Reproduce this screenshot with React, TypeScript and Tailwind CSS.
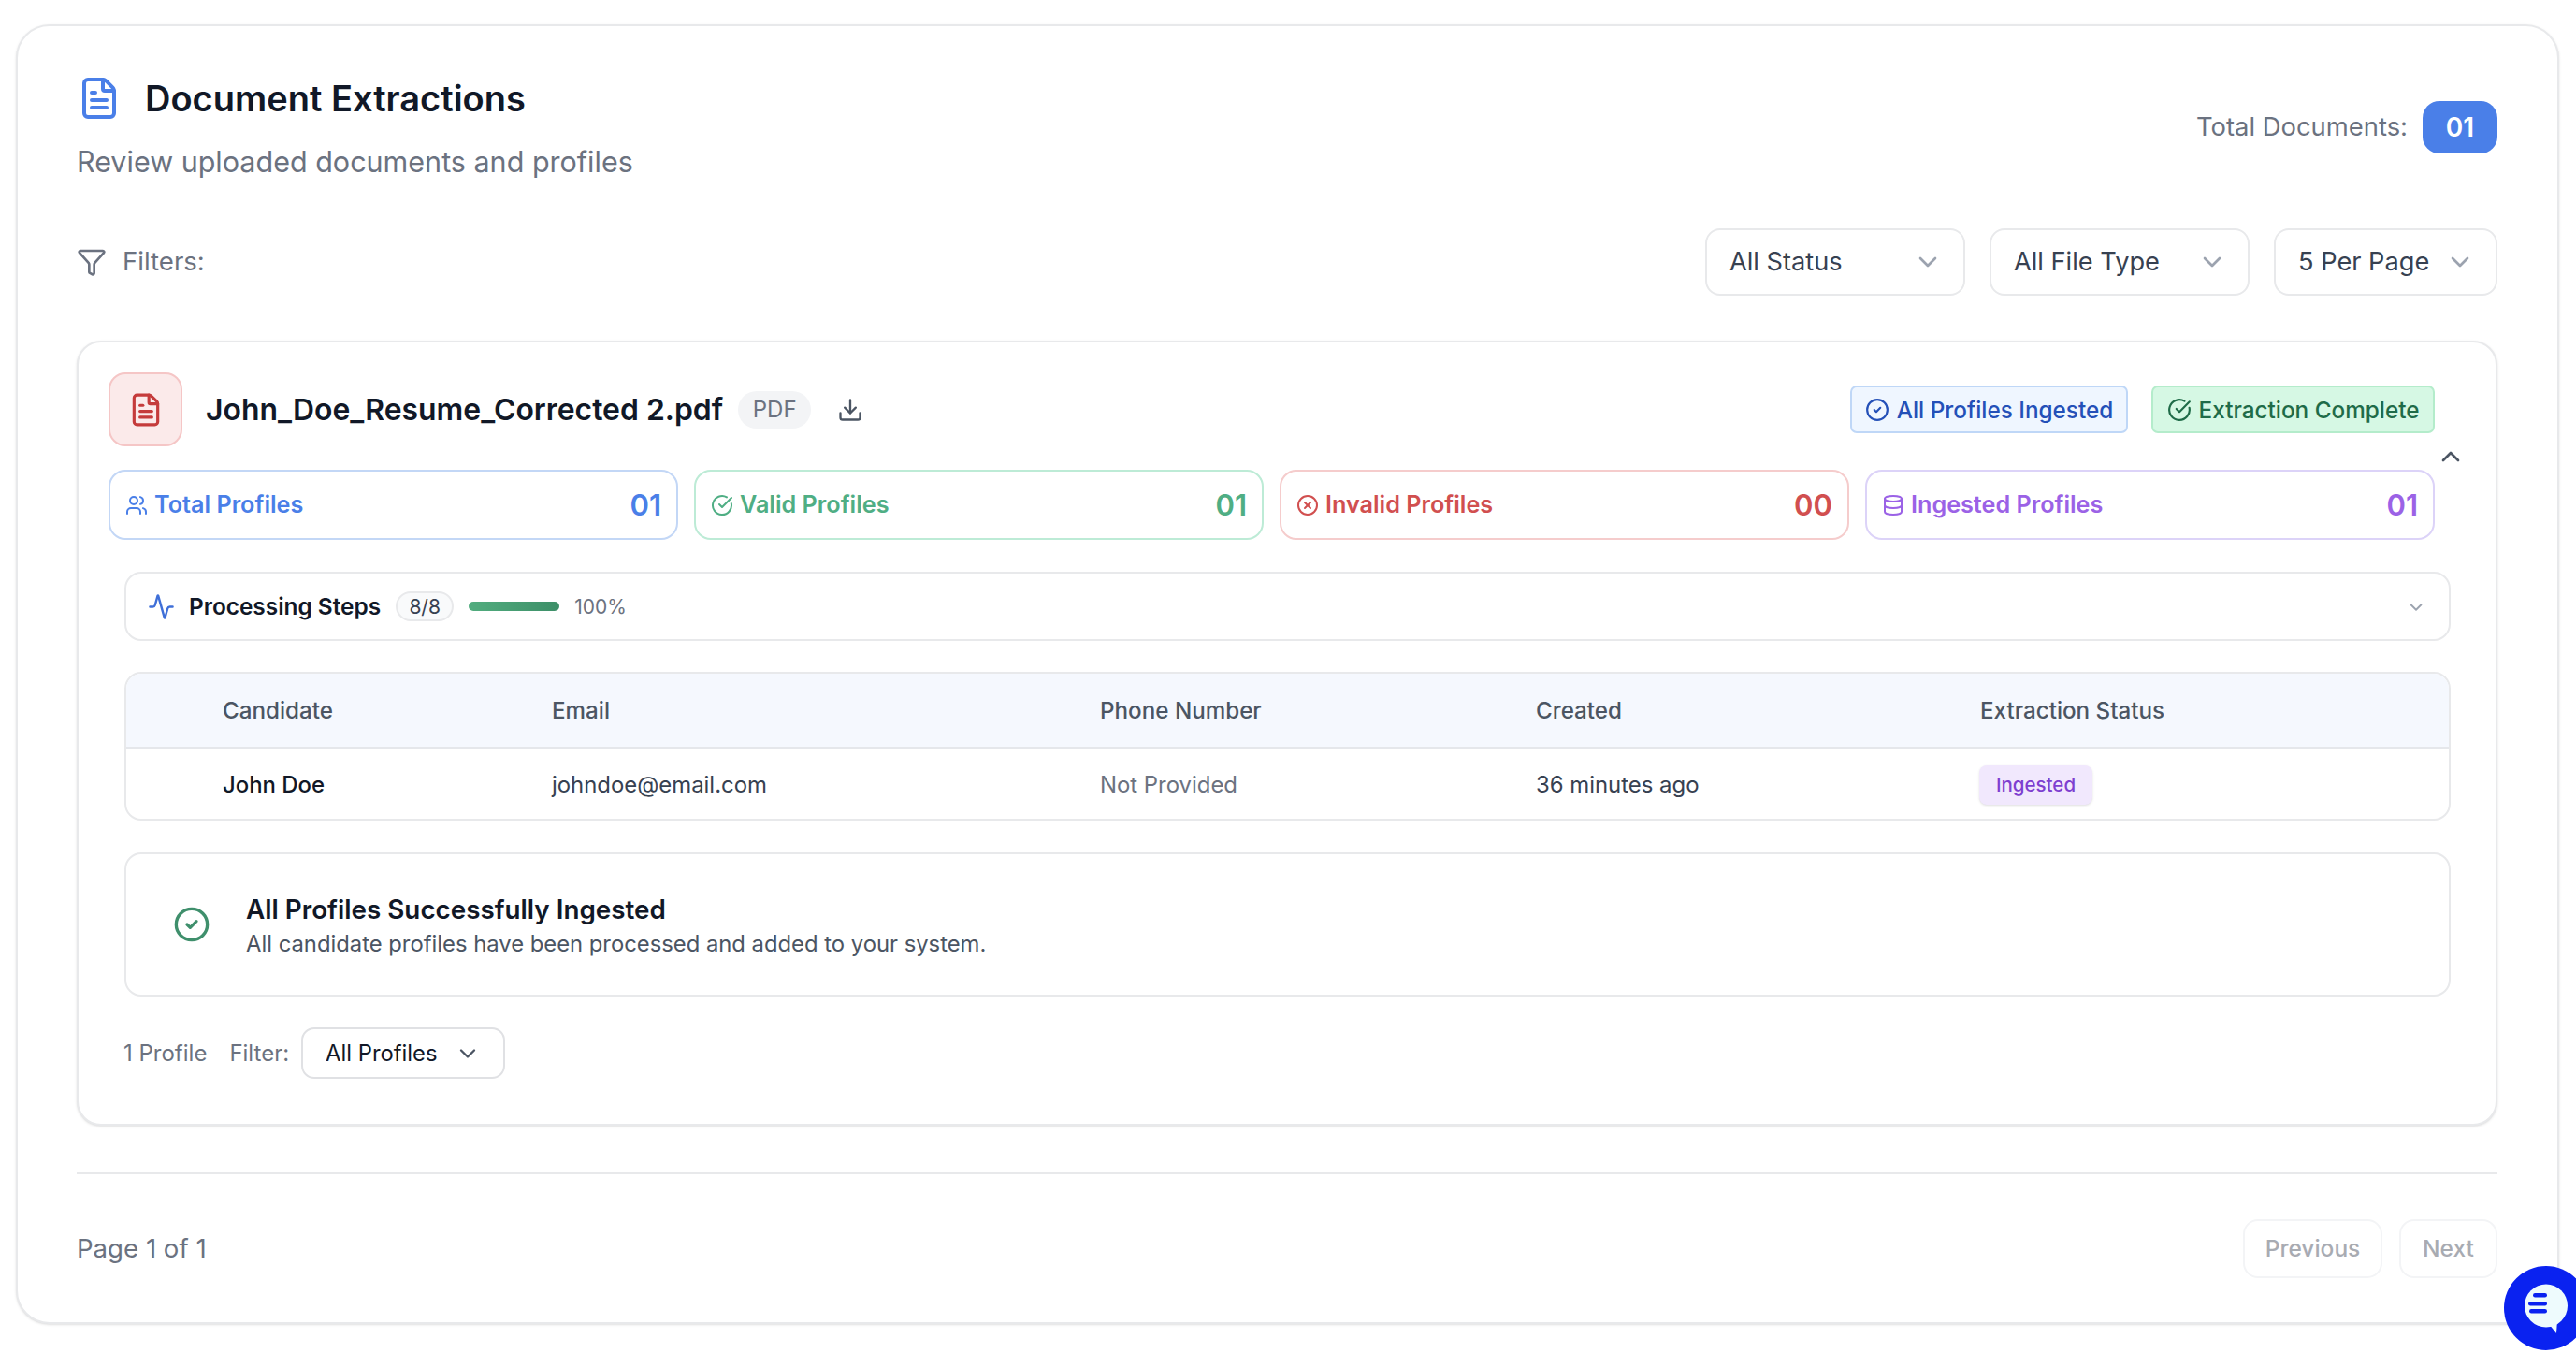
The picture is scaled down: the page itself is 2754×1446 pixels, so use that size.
import { FileText, ChevronDown, ChevronUp, Download, CircleCheck, CircleCheckBig, Users, CircleX, Database, Activity, Funnel } from "lucide-react";

const font = { fontFamily: "Inter, 'Liberation Sans', sans-serif" };

function Select({ label, w }: { label: string; w: string }) {
  return (
    <div className={`flex h-[72px] items-center justify-between rounded-[16px] border-2 border-[#e8e9eb] bg-white pl-[24px] pr-[22px] text-[27.2px] text-[#374151] ${w}`}>
      <span>{label}</span>
      <ChevronDown className="h-[32px] w-[32px] text-[#9ca3af]" strokeWidth={2} />
    </div>
  );
}

function Stat({ icon, label, value, border, color }: { icon: React.ReactNode; label: string; value: string; border: string; color: string }) {
  return (
    <div className={`flex h-[75px] flex-1 items-center justify-between rounded-[18px] border-2 bg-white pl-[16px] pr-[16px] pt-[1px] ${border} ${color}`}>
      <div className="flex items-center gap-[7px] text-[25.2px] font-semibold">
        {icon}
        <span>{label}</span>
      </div>
      <span className="text-[31px] font-semibold">{value}</span>
    </div>
  );
}

export default function App() {
  return (
    <div className="relative h-[1446px] w-full overflow-hidden bg-white" style={font}>
      <div className="ml-[17px] mt-[26px] h-[1389px] w-[2719px] rounded-[36px] border-2 border-[#e8e9eb] bg-white pl-[63px] pr-[64px] pt-[54px] shadow-sm">
        <div className="flex items-start justify-between">
          <div>
            <div className="flex h-[46px] items-center">
              <FileText className="h-[48px] w-[48px] text-[#4a7fe8]" strokeWidth={2} />
              <h1 className="ml-[25px] text-[38px] font-semibold text-[#111827]">Document Extractions</h1>
            </div>
            <p className="mt-[22px] h-[46px] text-[30.5px] leading-[46px] text-[#6b7280]">Review uploaded documents and profiles</p>
          </div>
          <div className="flex h-[108px] items-center gap-[16px]">
            <span className="text-[27.4px] text-[#6b7280]">Total Documents:</span>
            <span className="flex h-[56px] w-[80px] items-center justify-center rounded-[18px] bg-[#4a7fe8] text-[28px] font-semibold text-white">01</span>
          </div>
        </div>

        <div className="mt-[48px] flex h-[72px] items-center justify-between">
          <div className="flex items-center gap-[17px] text-[27.6px] text-[#6b7280]">
            <Funnel className="h-[32px] w-[32px]" strokeWidth={2} />
            <span>Filters:</span>
          </div>
          <div className="flex gap-[26px]">
            <Select label="All Status" w="w-[278px]" />
            <Select label="All File Type" w="w-[278px]" />
            <Select label="5 Per Page" w="w-[239px]" />
          </div>
        </div>

        <div className="relative mt-[48px] h-[839px] rounded-[26px] border-2 border-[#e8e9eb] bg-white pl-[32px] pr-[65px] pt-[32px] shadow-sm">
          <div className="flex h-[79px] items-center justify-between">
            <div className="flex items-center">
              <div className="flex h-[79px] w-[79px] items-center justify-center rounded-[18px] border-2 border-[#f5c6c6] bg-[#fbeaea]">
                <FileText className="h-[38px] w-[38px] text-[#c53b3b]" strokeWidth={2} />
              </div>
              <span className="ml-[25px] pt-[1px] text-[31.9px] font-semibold text-[#111827]">John_Doe_Resume_Corrected 2.pdf</span>
              <span className="ml-[16px] flex h-[40px] w-[78px] items-center justify-center rounded-full bg-[#f3f4f6] text-[24px] text-[#6b7280]">PDF</span>
              <Download className="ml-[28px] h-[28px] w-[28px] text-[#4b5563]" strokeWidth={2} />
            </div>
            <div className="flex items-center gap-[25px]">
              <div className="flex h-[51px] w-[297px] items-center justify-center gap-[8px] rounded-[7px] border-2 border-[#bfd7f7] bg-[#eff6ff] pt-[1px] text-[24.3px] font-medium text-[#2450b8]">
                <CircleCheck className="h-[26px] w-[26px]" strokeWidth={2} />
                <span>All Profiles Ingested</span>
              </div>
              <div className="flex h-[51px] w-[303px] items-center justify-center gap-[8px] rounded-[7px] border-2 border-[#b4eccb] bg-[#d6f8e4] pt-[1px] text-[24.3px] font-medium text-[#1f6b48]">
                <CircleCheckBig className="h-[26px] w-[26px]" strokeWidth={2} />
                <span>Extraction Complete</span>
              </div>
            </div>
          </div>
          <ChevronUp className="absolute right-[32px] top-[106px] h-[32px] w-[32px] text-[#4b5563]" strokeWidth={2} />

          <div className="mt-[25px] flex gap-[17px]">
            <Stat border="border-[#c3d7f6]" color="text-[#4a7fe8]" label="Total Profiles" value="01" icon={<Users className="h-[24px] w-[24px]" strokeWidth={2} />} />
            <Stat border="border-[#bdebd6]" color="text-[#4fae84]" label="Valid Profiles" value="01" icon={<CircleCheckBig className="h-[24px] w-[24px]" strokeWidth={2} />} />
            <Stat border="border-[#f5cccc]" color="text-[#d14f4f]" label="Invalid Profiles" value="00" icon={<CircleX className="h-[24px] w-[24px]" strokeWidth={2} />} />
            <Stat border="border-[#dcd3f8]" color="text-[#9b62e6]" label="Ingested Profiles" value="01" icon={<Database className="h-[24px] w-[24px]" strokeWidth={2} />} />
          </div>

          <div className="ml-[17px] mr-[-17px] mt-[34px] flex h-[74px] items-center justify-between rounded-[18px] border-2 border-[#e8e9eb] bg-white pl-[23px] pr-[24px] pt-[1px]">
            <div className="flex items-center">
              <Activity className="h-[29px] w-[29px] text-[#3f6fd8]" strokeWidth={2} />
              <span className="ml-[15px] text-[24.4px] font-semibold text-[#111827]">Processing Steps</span>
              <span className="ml-[16px] flex h-[32px] w-[62px] items-center justify-center rounded-full border-2 border-[#e8e9eb] bg-[#f9fafb] text-[21px] text-[#374151]">8/8</span>
              <div className="ml-[16px] h-[10px] w-[97px] rounded-full bg-gradient-to-r from-[#52ad7f] to-[#3d8f68]" />
              <span className="ml-[16px] text-[21px] text-[#6b7280]">100%</span>
            </div>
            <ChevronDown className="h-[22px] w-[22px] text-[#9ca3af]" strokeWidth={2} />
          </div>

          <div className="ml-[17px] mr-[-17px] mt-[33px] h-[159px] overflow-hidden rounded-[18px] border-2 border-[#e8e9eb]">
            <div className="grid h-[80px] grid-cols-[352px_586px_466px_475px_1fr] items-center border-b-2 border-[#e5e7eb] bg-[#f5f8fe] pl-[103px] pt-[2px] text-[24.2px] font-medium text-[#4b5563]">
              <span>Candidate</span>
              <span>Email</span>
              <span>Phone Number</span>
              <span>Created</span>
              <span>Extraction Status</span>
            </div>
            <div className="grid h-[75px] grid-cols-[352px_586px_466px_475px_1fr] items-center pl-[103px] pt-[3px] text-[23.9px]">
              <span className="font-medium text-[#111827]">John Doe</span>
              <span className="text-[#374151]">johndoe@email.com</span>
              <span className="text-[#6b7280]">Not Provided</span>
              <span className="text-[#374151]">36 minutes ago</span>
              <span className="ml-[-1px] flex h-[42px] w-[121px] items-center justify-center rounded-[8px] bg-[#f1e8fd] text-[20.5px] font-medium text-[#7e3fd0] shadow-sm">Ingested</span>
            </div>
          </div>

          <div className="ml-[17px] mr-[-17px] mt-[34px] flex h-[154px] items-center rounded-[18px] border-2 border-[#e8e9eb] bg-white pl-[50px]">
            <CircleCheck className="h-[40px] w-[40px] text-[#3f8f6c]" strokeWidth={2} />
            <div className="ml-[38px] mt-[5px]">
              <div className="text-[27.8px] font-semibold leading-[36px] text-[#111827]">All Profiles Successfully Ingested</div>
              <div className="mt-[1px] text-[23.8px] leading-[36px] text-[#4b5563]">All candidate profiles have been processed and added to your system.</div>
            </div>
          </div>

          <div className="ml-[16px] mt-[33px] flex h-[55px] items-center text-[24px] text-[#6b7280]">
            <span>1 Profile</span>
            <span className="ml-[24px]">Filter:</span>
            <div className="ml-[13px] flex h-[55px] w-[218px] items-center justify-between rounded-[14px] border-2 border-[#e0e1e4] bg-white pl-[24px] pr-[24px] text-[23.8px] text-[#111827]">
              <span>All Profiles</span>
              <ChevronDown className="h-[28px] w-[28px] text-[#4b5563]" strokeWidth={2} />
            </div>
          </div>
        </div>

        <div className="mt-[50px] h-[2px] bg-[#e8e9eb]" />

        <div className="mt-[48px] flex items-center justify-between">
          <span className="text-[27.6px] text-[#6b7280]">Page 1 of 1</span>
          <div className="flex gap-[18px]">
            <div className="flex h-[63px] w-[149px] items-center justify-center rounded-[16px] border-2 border-[#f3f4f6] text-[24.5px] font-medium text-[#a8abb2]">Previous</div>
            <div className="flex h-[63px] w-[105px] items-center justify-center rounded-[16px] border-2 border-[#f3f4f6] text-[24.5px] font-medium text-[#a8abb2]">Next</div>
          </div>
        </div>
      </div>

      <div className="absolute left-[2677px] top-[1353px] h-[90px] w-[90px] rounded-full bg-[#0a22f0]">
        <svg viewBox="0 0 90 90" className="h-[90px] w-[90px]">
          <circle cx="45" cy="42.5" r="23" fill="#eefbfd" />
          <path d="M48 62l8 10 1-14z" fill="#eefbfd" />
          <rect x="31" y="29" width="15" height="4.5" rx="2.2" fill="#0a22f0" />
          <rect x="26" y="38" width="20" height="4.5" rx="2.2" fill="#0a22f0" />
          <rect x="27" y="46" width="19" height="4.5" rx="2.2" fill="#0a22f0" />
        </svg>
      </div>
    </div>
  );
}
